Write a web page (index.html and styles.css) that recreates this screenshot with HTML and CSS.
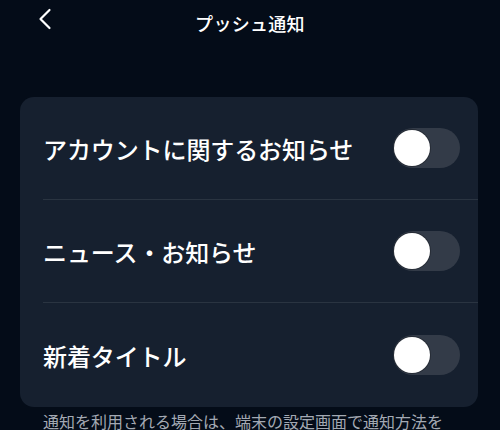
FILE: index.html
```html
<!DOCTYPE html>
<html lang="ja">
<head>
    <meta charset="UTF-8">
    <meta name="viewport" content="width=device-width, initial-scale=1.0">
    <title>プッシュ通知</title>
    <link rel="stylesheet" href="styles.css">
</head>
<body>
    <header class="topbar">
        <button class="back" aria-label="戻る">
            <svg width="14" height="22" viewBox="0 0 14 22">
                <path d="M11.5 2 L2.5 11 L11.5 20" fill="none" stroke="#fff" stroke-width="2.2" stroke-linecap="round" stroke-linejoin="round"/>
            </svg>
        </button>
        <h1 class="title">プッシュ通知</h1>
    </header>

    <main class="content">
        <section class="card">
            <div class="row">
                <span class="label">アカウントに関するお知らせ</span>
                <label class="toggle"><input type="checkbox"><span class="knob"></span></label>
            </div>
            <div class="row">
                <span class="label">ニュース・お知らせ</span>
                <label class="toggle"><input type="checkbox"><span class="knob"></span></label>
            </div>
            <div class="row">
                <span class="label">新着タイトル</span>
                <label class="toggle"><input type="checkbox"><span class="knob"></span></label>
            </div>
        </section>
        <p class="note">通知を利用される場合は、端末の設定画面で通知方法を変更してください。</p>
    </main>
</body>
</html>
```

FILE: styles.css
```css
body {
    margin: 0;
    background-color: #040c18;
    color: #fff;
    font-family: "Noto Sans CJK JP", "Noto Sans", sans-serif;
    overflow: hidden;
}
.topbar {
    position: relative;
    height: 46px;
    display: flex;
    align-items: center;
    justify-content: center;
}
.back {
    position: absolute;
    left: 34px;
    top: 8px;
    background: none;
    border: none;
    padding: 0 4px;
    cursor: pointer;
}
.title {
    margin: 0;
    font-size: 18px;
    font-weight: 500;
    letter-spacing: 0.3px;
}
.content {
    padding: 51px 22px 0 20px;
}
.card {
    background-color: #16202f;
    border-radius: 14px;
    padding-left: 23px;
}
.row {
    height: 102px;
    display: flex;
    align-items: center;
    justify-content: space-between;
    padding-right: 18px;
    border-bottom: 1px solid #2a3441;
}
.row:last-child {
    border-bottom: none;
    height: 104px;
}
.label {
    font-size: 24px;
    font-weight: 500;
    letter-spacing: -0.1px;
}
.toggle {
    position: relative;
    width: 67px;
    height: 40px;
    border-radius: 20px;
    background-color: #333b48;
}
.toggle input {
    display: none;
}
.knob {
    position: absolute;
    left: 1px;
    top: 2px;
    width: 36px;
    height: 36px;
    border-radius: 50%;
    background: #fff;
    box-shadow: 0 0 0 1px rgba(0, 0, 0, 0.25);
}
.note {
    margin: 2px 0 0 23px;
    max-width: 412px;
    font-size: 16px;
    line-height: 1.6;
    color: #a3a9b3;
}
```
